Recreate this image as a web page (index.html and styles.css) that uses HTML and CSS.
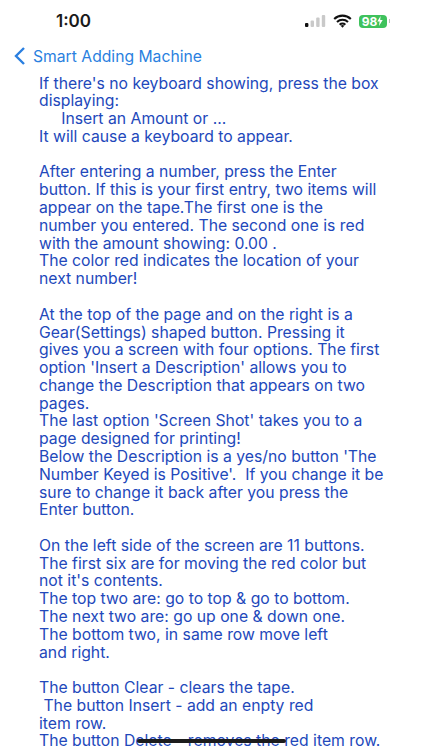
FILE: index.html
```html
<!DOCTYPE html>
<html lang="en">
<head>
<meta charset="utf-8">
<title>Smart Adding Machine</title>
<link rel="stylesheet" href="styles.css">
</head>
<body>
<div class="screen">
  <header class="status">
    <span class="time">1:00</span>
    <div class="indicators">
      <svg class="signal" width="21" height="12" viewBox="0 0 21 12"><rect x="0" y="8" width="3.4" height="4" rx="1" fill="#111"/><rect x="5.6" y="5.5" width="3.4" height="6.5" rx="1" fill="#c9c9c9"/><rect x="11.2" y="2.5" width="3.4" height="9.5" rx="1" fill="#c9c9c9"/><rect x="16.8" y="0" width="3.4" height="12" rx="1" fill="#c9c9c9"/></svg>
      <svg class="wifi" width="19" height="14" viewBox="0 0 19 14"><path d="M1.2 5A12 12 0 0 1 17.8 5M4 8A8 8 0 0 1 15 8M6.7 10.8A4 4 0 0 1 12.3 10.8" fill="none" stroke="#111" stroke-width="2.1"/><path d="M9.5 13.8L7.7 11.8A2.6 2.6 0 0 1 11.3 11.8Z" fill="#111"/></svg>
      <div class="battery"><span class="pct">98</span><svg class="bolt" width="6" height="10" viewBox="0 0 6 10"><path d="M3.6 0L0.3 5.6H2.6L2 10L5.7 4H3.2Z" fill="#fff"/></svg></div>
      <span class="nub"></span>
    </div>
  </header>
  <nav class="nav">
    <svg class="chevron" width="13" height="20" viewBox="0 0 13 20"><path d="M11 2L3 10L11 18" fill="none" stroke="#2a7fe0" stroke-width="2.4"/></svg>
    <span class="title">Smart Adding Machine</span>
  </nav>
  <main class="help">
    <p>If there's no keyboard showing, press the box<br>displaying:<br>&nbsp;&nbsp;&nbsp;&nbsp;&nbsp;Insert an Amount or ...<br>It will cause a keyboard to appear.</p>
    <p>After entering a number, press the Enter<br>button. If this is your first entry, two items will<br>appear on the tape.The first one is the<br>number you entered. The second one is red<br>with the amount showing: 0.00 .<br>The color red indicates the location of your<br>next number!</p>
    <p>At the top of the page and on the right is a<br>Gear(Settings) shaped button. Pressing it<br>gives you a screen with four options. The first<br>option 'Insert a Description' allows you to<br>change the Description that appears on two<br>pages.<br>The last option 'Screen Shot' takes you to a<br>page designed for printing!<br>Below the Description is a yes/no button 'The<br>Number Keyed is Positive'.&nbsp; If you change it be<br>sure to change it back after you press the<br>Enter button.</p>
    <p>On the left side of the screen are 11 buttons.<br>The first six are for moving the red color but<br>not it's contents.<br>The top two are: go to top &amp; go to bottom.<br>The next two are: go up one &amp; down one.<br>The bottom two, in same row move left<br>and right.</p>
    <p>The button Clear - clears the tape.<br>&nbsp;The button Insert - add an enpty red<br>item row.<br>The button Delete - removes the red item row.</p>
  </main>
  <div class="home"></div>
</div>
</body>
</html>
```
FILE: styles.css
```css
* { box-sizing: border-box; }
html, body { margin: 0; padding: 0; background: #fff; }
.screen { position: relative; width: 422px; height: 750px; overflow: hidden; font-family: Inter, "Liberation Sans", sans-serif; }
.status { height: 42px; display: flex; justify-content: space-between; align-items: center; padding: 0 32px 0 56px; }
.time { font-size: 17px; font-weight: 600; color: #1a1a1a; }
.indicators { display: flex; align-items: center; gap: 7px; }
.battery { width: 28px; height: 13px; border-radius: 4px; background: #3fc25c; display: flex; align-items: center; justify-content: center; color: #fff; }
.pct { font-size: 12px; font-weight: 700; line-height: 13px; }
.nub { width: 1.5px; height: 4px; background: #bdbdbd; margin-left: -5px; }
.nav { height: 28px; display: flex; align-items: center; gap: 7px; padding-left: 13px; }
.title { font-size: 15.7px; color: #2a7fe0; }
.help { padding: 4.6px 0 0 39px; font-size: 15.75px; line-height: 17.78px; color: #2248bb; white-space: nowrap; }
.help p { margin: 0 0 17.78px; }
.home { position: absolute; left: 137px; top: 739px; width: 149px; height: 4px; border-radius: 2px; background: #1c1c1c; }
```
